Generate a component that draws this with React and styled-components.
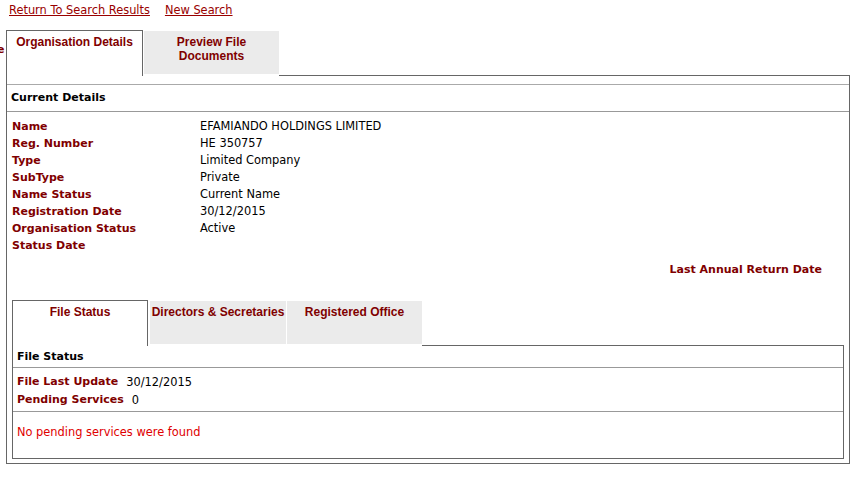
import React from 'react';
import styled, { createGlobalStyle } from 'styled-components';

const GlobalStyle = createGlobalStyle`
  body {
    margin: 0;
    background: #fff;
    font-family: "DejaVu Sans", Verdana, sans-serif;
    font-size: 11.4px;
    color: #000;
  }
`;

const Links = styled.div`
  display: flex;
  gap: 15px;
  padding: 3px 0 0 9px;
  height: 27px;
  line-height: 14px;
`;

const Link = styled.a`
  color: #990000;
  text-decoration: underline;
  cursor: pointer;
`;

const Outer = styled.div`
  margin-left: ${p => p.$left}px;
  width: ${p => p.$width}px;
`;

const TabRow = styled.div`
  display: flex;
  height: ${p => p.$height}px;
  position: relative;
`;

const Stub = styled.span`
  position: absolute;
  left: -9px;
  top: 13px;
  width: 9px;
  text-align: left;
  color: #800000;
  font-weight: bold;
  font-size: 11px;
  overflow: hidden;
`;

const Tab = styled.div`
  box-sizing: border-box;
  width: ${p => p.$width}px;
  flex: none;
  font-family: "Liberation Sans", Arial, sans-serif;
  font-weight: bold;
  font-size: 12px;
  line-height: 14px;
  color: #800000;
  text-align: center;
  padding-top: 4px;
  ${p => p.$active
    ? `
    background: #fff;
    border: 1px solid #666;
    border-bottom: none;
  `
    : `
    background: #ebebeb;
    margin: 1px 0 2px ${p.$gap}px;
  `}
`;

const Filler = styled.div`
  flex: 1;
  border-bottom: 1px solid #666;
`;

const Panel = styled.div`
  border: 1px solid #666;
  border-top: none;
  padding-top: ${p => p.$top || 0}px;
  padding-bottom: ${p => p.$bottom || 0}px;
`;

const Header = styled.div`
  font-weight: bold;
  font-size: 11px;
  color: #000;
  height: ${p => p.$height}px;
  line-height: ${p => p.$height}px;
  padding-left: ${p => p.$pad}px;
  border-top: ${p => (p.$lined ? '1px solid #aaa' : 'none')};
  border-bottom: 1px solid #999;
`;

const DetailGrid = styled.div`
  display: grid;
  grid-template-columns: 188px 1fr;
  padding: 6px 0 0 5px;
  line-height: 17px;
`;

const Label = styled.div`
  color: #800000;
  font-weight: bold;
  font-size: 11px;
  white-space: nowrap;
`;

const Value = styled.div`
  color: #000;
`;

const RightLabel = styled.div`
  text-align: right;
  color: #800000;
  font-weight: bold;
  font-size: 11px;
  line-height: 17px;
  padding: 7px 27px 0 0;
  height: 24px;
`;

const Inner = styled.div`
  margin: 15px 5px 0 5px;
`;

const InfoRows = styled.div`
  padding: 5px 4px 2px 4px;
  border-bottom: 1px solid #999;
`;

const InfoRow = styled.div`
  display: flex;
  gap: 8px;
  line-height: 18px;
`;

const Notice = styled.div`
  color: #e00000;
  padding: 12px 4px 0 4px;
  height: 34px;
  line-height: 16px;
`;

const details = [
  ['Name', 'EFAMIANDO HOLDINGS LIMITED'],
  ['Reg. Number', 'HE 350757'],
  ['Type', 'Limited Company'],
  ['SubType', 'Private'],
  ['Name Status', 'Current Name'],
  ['Registration Date', '30/12/2015'],
  ['Organisation Status', 'Active'],
  ['Status Date', ''],
];

export default function App() {
  return (
    <>
      <GlobalStyle />
      <Links>
        <Link>Return To Search Results</Link>
        <Link>New Search</Link>
      </Links>
      <Outer $left={6} $width={844}>
        <TabRow $height={46}>
          <Stub>e</Stub>
          <Tab $active $width={137}>Organisation Details</Tab>
          <Tab $width={135} $gap={1}>Preview File<br />Documents</Tab>
          <Filler />
        </TabRow>
        <Panel $top={8} $bottom={4}>
          <Header $height={26} $pad={4} $lined>Current Details</Header>
          <DetailGrid>
            {details.map(([k, v]) => (
              <React.Fragment key={k}>
                <Label>{k}</Label>
                <Value>{v}</Value>
              </React.Fragment>
            ))}
          </DetailGrid>
          <RightLabel>Last Annual Return Date</RightLabel>
          <Inner>
            <TabRow $height={46}>
              <Tab $active $width={136}>File Status</Tab>
              <Tab $width={136} $gap={2}>Directors &amp; Secretaries</Tab>
              <Tab $width={135} $gap={1}>Registered Office</Tab>
              <Filler />
            </TabRow>
            <Panel>
              <Header $height={21} $pad={4}>File Status</Header>
              <InfoRows>
                <InfoRow><Label>File Last Update</Label><Value>30/12/2015</Value></InfoRow>
                <InfoRow><Label>Pending Services</Label><Value>0</Value></InfoRow>
              </InfoRows>
              <Notice>No pending services were found</Notice>
            </Panel>
          </Inner>
        </Panel>
      </Outer>
    </>
  );
}
